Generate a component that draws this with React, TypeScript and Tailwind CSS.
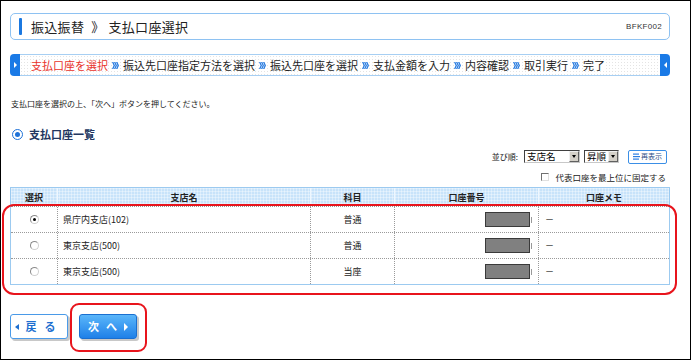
import React from "react";

const Sep = () => (
  <svg width="7" height="7" viewBox="0 0 7 7" className="mx-[4px] shrink-0">
    <polygon points="0,0 1.4,0 3,3.5 1.4,7 0,7 1.6,3.5" fill="#2a7de1" />
    <polygon points="2,0 3.4,0 5,3.5 3.4,7 2,7 3.6,3.5" fill="#2a7de1" />
    <polygon points="4,0 5.4,0 7,3.5 5.4,7 4,7 5.6,3.5" fill="#2a7de1" />
  </svg>
);

const Radio = ({ checked }: { checked?: boolean }) => (
  <div className="flex h-[9px] w-[9px] items-center justify-center rounded-full border border-[#8a8a8a] border-r-[#d0d0d0] border-b-[#d0d0d0] bg-white">
    {checked && <div className="h-[3px] w-[3px] rounded-full bg-black" />}
  </div>
);

const Select = ({ label, w }: { label: string; w: string }) => (
  <div className={`flex h-[13px] items-stretch border border-[#404040] border-r-[#c8c8c8] border-b-[#c8c8c8] bg-white ${w}`}>
    <div className="flex flex-1 items-center pl-[2px] text-[9.5px] leading-none text-black">{label}</div>
    <div className="flex w-[10px] items-center justify-center border border-[#f0f0f0] border-r-[#606060] border-b-[#606060] bg-[#d4d0c8]">
      <div className="h-0 w-0 border-x-[2.5px] border-t-[3px] border-x-transparent border-t-black" />
    </div>
  </div>
);

const rows = [
  { name: "県庁内支店(102)", kind: "普通", checked: true },
  { name: "東京支店(500)", kind: "普通", checked: false },
  { name: "東京支店(500)", kind: "当座", checked: false },
];

export default function App() {
  return (
    <div className="relative h-[360px] w-[691px] overflow-hidden border border-black bg-white pl-[9px] font-['Noto_Sans_CJK_JP','Noto_Sans',sans-serif] text-[#222]">
      {/* Title bar */}
      <div className="mt-[12px] flex h-[27px] w-[660px] items-center rounded-[5px] border border-[#8ec2f2] pl-[8px] pr-[7px]">
        <div className="h-[17px] w-[3px] rounded-[1px] bg-[#1b78e0]" />
        <div className="ml-[9px] flex items-center text-[13px] leading-none tracking-[0.3px] text-[#222]">
          <span>振込振替</span>
          <span className="ml-[7px] mr-[4px]">》</span>
          <span>支払口座選択</span>
        </div>
        <div className="ml-auto font-['Liberation_Sans',sans-serif] text-[8px] leading-none tracking-[0.3px] text-[#333]">BFKF002</div>
      </div>

      {/* Step bar */}
      <div className="mt-[14px] flex h-[22px] w-[660px]">
        <div className="flex w-[10px] items-center justify-center rounded-l-[4px] bg-[#1a7ae6]">
          <div className="h-0 w-0 border-y-[3px] border-l-[3px] border-y-transparent border-l-white" />
        </div>
        <div className="flex flex-1 items-center border-y border-[#a7cff3] bg-[radial-gradient(#e4e4e4_0.8px,transparent_0.9px)] bg-[length:3px_3px] pl-[11px] text-[11px] leading-none text-[#222]">
          <span className="bg-white text-[#e8322a]">支払口座を選択</span>
          <Sep />
          <span className="bg-white">振込先口座指定方法を選択</span>
          <Sep />
          <span className="bg-white">振込先口座を選択</span>
          <Sep />
          <span className="bg-white">支払金額を入力</span>
          <Sep />
          <span className="bg-white">内容確認</span>
          <Sep />
          <span className="bg-white">取引実行</span>
          <Sep />
          <span className="bg-white">完了</span>
        </div>
        <div className="flex w-[10px] items-center justify-center rounded-r-[4px] bg-[#1a7ae6]">
          <div className="h-0 w-0 border-y-[3px] border-r-[3px] border-y-transparent border-r-white" />
        </div>
      </div>

      {/* Instruction */}
      <div className="ml-[1px] mt-[23px] text-[8px] leading-[10px] text-[#222]">支払口座を選択の上、「次へ」ボタンを押してください。</div>

      {/* Heading */}
      <div className="ml-[2px] mt-[19px] flex h-[12px] items-center">
        <div className="flex h-[11px] w-[11px] items-center justify-center rounded-full border-[1.5px] border-[#1e72d8] bg-white">
          <div className="h-[5px] w-[5px] rounded-full bg-[#1e72d8]" />
        </div>
        <div className="ml-[6px] text-[11px] font-bold leading-none text-[#22365f]">支払口座一覧</div>
      </div>

      {/* Sort row */}
      <div className="mt-[10px] flex h-[13px] w-[660px] items-center justify-end pr-[3px]">
        <div className="mr-[6px] text-[8px] leading-none">並び順:</div>
        <Select label="支店名" w="w-[56px]" />
        <div className="w-[4px]" />
        <Select label="昇順" w="w-[35px]" />
        <div className="w-[9px]" />
        <div className="flex h-[14px] w-[39px] items-center justify-center rounded-[2px] border border-[#3b8fe6] bg-white">
          <svg width="7" height="7" viewBox="0 0 7 7" className="mr-[1px]">
            <rect x="0" y="0.5" width="6" height="1.2" fill="#2a7de1" />
            <rect x="0" y="3" width="7" height="1.2" fill="#2a7de1" />
            <rect x="0" y="5.5" width="6" height="1.2" fill="#2a7de1" />
          </svg>
          <span className="text-[7px] leading-none text-[#2c4f86]">再表示</span>
        </div>
      </div>

      {/* Checkbox row */}
      <div className="mt-[9px] flex h-[10px] w-[660px] items-center justify-end pr-[4px]">
        <div className="h-[8px] w-[8px] border border-[#707070] border-r-[#e0e0e0] border-b-[#e0e0e0] bg-white" />
        <div className="ml-[6px] text-[8.5px] leading-none">代表口座を最上位に固定する</div>
      </div>

      {/* Table */}
      <div className="mt-[5px] w-[660px] border border-[#9ccaf0]">
        <div className="grid h-[18px] grid-cols-[46px_253px_84px_144px_131px] bg-[#c8e3fa] bg-[linear-gradient(90deg,rgba(255,255,255,0.35)_1px,transparent_1px),linear-gradient(rgba(255,255,255,0.35)_1px,transparent_1px)] bg-[length:3px_3px] text-[9px] font-bold leading-none text-[#222]">
          <div className="flex items-center justify-center">選択</div>
          <div className="flex items-center justify-center border-l border-[#eef7ff]">支店名</div>
          <div className="flex items-center justify-center border-l border-[#eef7ff]">科目</div>
          <div className="flex items-center justify-center border-l border-[#eef7ff]">口座番号</div>
          <div className="flex items-center justify-center border-l border-[#eef7ff]">口座メモ</div>
        </div>
        {rows.map((r, i) => (
          <div
            key={i}
            className="grid h-[26px] grid-cols-[46px_253px_84px_144px_131px] border-t border-dotted border-[#9a9a9a] text-[9px] leading-none text-[#222]"
          >
            <div className="flex items-center justify-center">
              <Radio checked={r.checked} />
            </div>
            <div className="flex items-center border-l border-dotted border-[#9a9a9a] pl-[5px]">{r.name}</div>
            <div className="flex items-center justify-center border-l border-dotted border-[#9a9a9a]">{r.kind}</div>
            <div className="flex items-center justify-end border-l border-dotted border-[#9a9a9a] pr-[6px]">
              <div className="h-[15px] w-[45px] border border-[#3a3a3a] bg-[#808080]" />
              <div className="ml-[1px] h-[6px] w-[1px] bg-[#999]" />
            </div>
            <div className="flex items-center border-l border-dotted border-[#9a9a9a] pl-[6px]">－</div>
          </div>
        ))}
      </div>

      {/* Buttons */}
      <div className="mt-[29px] flex items-start">
        <div className="flex h-[25px] w-[58px] items-center justify-center rounded-[3px] border border-[#4a9ae8] bg-white text-[11px] font-bold leading-none text-[#1e6fd0] shadow-[2px_2px_0_#c8c8c8]">
          <div className="mr-[7px] h-0 w-0 border-y-[3.5px] border-r-[4px] border-y-transparent border-r-[#1e6fd0]" />
          <span className="tracking-[8px]">戻る</span>
        </div>
        <div className="ml-[11px] flex h-[25px] w-[58px] items-center justify-center rounded-[3px] border border-[#1a6fd0] bg-[linear-gradient(#5ab6fa,#1f80e8)] text-[11px] font-bold leading-none text-white shadow-[2px_2px_0_#c8c8c8]">
          <span className="tracking-[7px]">次へ</span>
          <div className="h-0 w-0 border-y-[4px] border-l-[4px] border-y-transparent border-l-white" />
        </div>
      </div>

      {/* Red highlights */}
      <div className="absolute left-[1px] top-[203px] h-[91px] w-[675px] rounded-[12px] border-2 border-[#e8141c]" />
      <div className="absolute left-[69px] top-[302px] h-[49px] w-[77px] rounded-[9px] border-2 border-[#e8141c]" />
    </div>
  );
}
